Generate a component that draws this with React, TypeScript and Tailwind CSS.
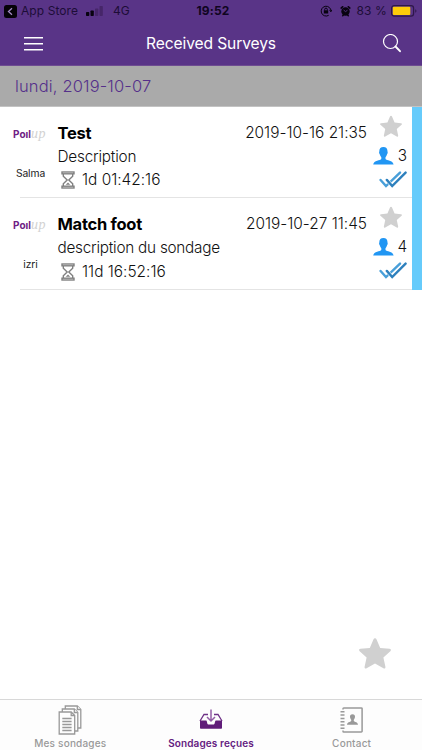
import React from "react";

const STAR =
  "M12 .9c.5 0 .9.3 1.1.8l2.8 6.5 7 .7c1.1.1 1.4 1.1.6 1.8l-5.2 4.7 1.5 6.9c.2 1.1-.6 1.7-1.5 1.1L12 19.8l-6.3 3.6c-.9.6-1.7 0-1.500-1.100l1.500-6.900-5.200-4.700c-.8-.7-.5-1.700.6-1.800l7-.7 2.800-6.500c.2-.5.6-.8 1.100-.8Z";

function Star({ className }: { className: string }) {
  return (
    <svg viewBox="0 0 24 24" className={className} fill="currentColor">
      <path d={STAR} />
    </svg>
  );
}

function Hourglass() {
  return (
    <svg viewBox="0 0 14 18" className="h-[18px] w-[14px] text-[#808080]" fill="none" stroke="currentColor" strokeWidth="1.4">
      <rect x="1" y="1" width="12" height="1.800" />
      <rect x="1" y="15.200" width="12" height="1.800" />
      <path d="M2.300 3v2.200L6.200 9l-3.900 3.800V15M11.700 3v2.200L7.800 9l3.900 3.800V15" />
      <path d="m7 11.600 2.300 2.200H4.700Z" fill="currentColor" stroke="none" />
    </svg>
  );
}

function Person() {
  return (
    <svg viewBox="0 0 21 18" className="h-[18px] w-[21px] text-[#2196f3]" fill="currentColor">
      <path d="M10.400 0C7.700 0 6.300 1.600 6.300 4.200c0 .8-.3.800-.2 1.600.1.900.5 1.100.7 1.700.3 1.200.9 2 1.500 2.700v1.700C7.500 13.600.7 13 .2 17.500h20.400c-.5-4.500-7.300-3.900-8.100-5.600v-1.700c.6-.7 1.200-1.500 1.500-2.700.2-.6.6-.8.7-1.700.1-.8-.2-.8-.2-1.600C14.500 1.600 13.100 0 10.400 0Z" />
    </svg>
  );
}

function DoubleCheck() {
  return (
    <svg viewBox="0 0 28 17" className="h-[17px] w-[28px]" fill="none" strokeLinecap="round" strokeWidth="2.400">
      <path d="m1.600 9 5.400 6L21 1.600" stroke="#489fd9" />
      <path d="m7.500 8.600 5.700 6.400L26.800 1.600" stroke="#fff" strokeWidth="3.400" />
      <path d="m7.800 8.900 5.400 6.100L26.600 1.600" stroke="#2e80bd" />
    </svg>
  );
}

type Survey = {
  title: string;
  description: string;
  remaining: string;
  date: string;
  author: string;
  votes: number;
};

const surveys: Survey[] = [
  { title: "Test", description: "Description", remaining: "1d 01:42:16", date: "2019-10-16 21:35", author: "Salma", votes: 3 },
  { title: "Match foot", description: "description du sondage", remaining: "11d 16:52:16", date: "2019-10-27 11:45", author: "izri", votes: 4 },
];

function SurveyRow({ survey, last }: { survey: Survey; last: boolean }) {
  return (
    <article className={last ? "flex h-[92px]" : "flex h-[91px]"}>
      <div className="flex w-[57px] flex-col items-center pl-1">
        <div className="mt-[19px] flex h-4 items-center pr-[2px] whitespace-nowrap text-[10px] leading-4">
          <span className="font-bold tracking-[0px] text-[#702084]">Poıl</span>
          <span className="font-['Liberation_Serif',serif] text-[14px] tracking-[0.5px] text-[#d2d2d2] italic">up</span>
        </div>
        <span className="mt-[22px] pt-px text-[10.300px] leading-4 tracking-[-0.1px] text-[#222]">{survey.author}</span>
      </div>
      <div className="flex flex-1 flex-col pl-[0.500px]">
        <div className="mt-[14px] flex h-6 items-center justify-between">
          <h2 className="text-[16.500px] font-bold tracking-[-0.280px] text-black">{survey.title}</h2>
          <time className="text-[15.400px] font-light tracking-[0.010px] text-[#111]">{survey.date}</time>
        </div>
        <p className={last ? "h-6 text-[15.300px] leading-[24px] font-light tracking-[-0.240px] text-[#111]" : "h-[23px] text-[15.300px] leading-[23px] font-light tracking-[-0.200px] text-[#111]"}>
          {survey.description}
        </p>
        <div className="flex h-6 items-center gap-[7px] pl-[3.500px]">
          <Hourglass />
          <span className="text-[15.400px] font-light tracking-[0.010px] text-[#111]">{survey.remaining}</span>
        </div>
      </div>
      <div className="flex w-[45px] flex-col pt-[8px] pr-[5px]">
        <Star className="ml-[13px] h-[22px] w-[22px] text-[#d0d0d0]" />
        <div className="mt-[7px] ml-[6px] flex h-[24px] items-center justify-between">
          <Person />
          <span className="text-[15.300px] font-light text-[#111]">{survey.votes}</span>
        </div>
        <div className="mt-[3px] ml-[12px] w-7">
          <DoubleCheck />
        </div>
      </div>
      <div className="w-[10px] bg-[#66cbfb]" />
    </article>
  );
}

function StatusBar() {
  return (
    <div className="grid h-[22px] grid-cols-[1fr_auto_1fr] items-center text-[12px] leading-[22px] text-[#1d0d37]">
      <div className="flex items-center pl-1">
        <svg viewBox="0 0 13 13" className="h-[13px] w-[13px]">
          <rect width="13" height="13" rx="2.500" fill="#050208" />
          <path d="M8 3.300 4.500 6.500 8 9.700" fill="none" stroke="#a38bc5" strokeWidth="1.300" />
        </svg>
        <span className="ml-1 tracking-[0.08px]">App Store</span>
        <svg viewBox="0 0 17 10" className="ml-2 h-[10px] w-[17px]">
          <rect y="6" width="3.300" height="4" rx=".7" fill="#080310" />
          <rect x="4.500" y="4.500" width="3.300" height="5.500" rx=".7" fill="#080310" />
          <rect x="9" y="2.500" width="3.300" height="7.500" rx=".7" fill="#462669" />
          <rect x="13.500" y="0" width="3.300" height="10" rx=".7" fill="#462669" />
        </svg>
        <span className="ml-[10px]">4G</span>
      </div>
      <span className="pl-1 text-[12px] font-bold tracking-[0.2px] text-[#10051f]">19:52</span>
      <div className="flex items-center justify-end pr-[5px]">
        <svg viewBox="0 0 12 12" className="mr-2 h-3 w-3" fill="none" stroke="#080310">
          <path d="M11 6.200A4.900 4.900 0 1 0 8.700 10.300M9.400 5.200l1.600 1.500 1-1.900" strokeWidth="1" />
          <rect x="3.800" y="5.300" width="4.400" height="3.200" fill="#080310" stroke="none" />
          <path d="M4.700 5.500V4.400a1.300 1.300 0 0 1 2.600 0v1.100" />
        </svg>
        <svg viewBox="0 0 11 12" className="mr-[6px] h-3 w-[11px]">
          <circle cx="5.500" cy="6.500" r="4.200" fill="#080310" />
          <path d="M1.100 3.100 2.800 1.700M9.900 3.100 8.200 1.700M2.700 10.700l.7-.7M8.300 10.700l-.7-.7" stroke="#080310" strokeWidth="1.500" strokeLinecap="round" />
          <path d="m3.600 5 1.900 1.600 2-1.400" fill="none" stroke="#593487" strokeWidth=".9" />
        </svg>
        <span className="mr-1 whitespace-nowrap text-[12px] tracking-[0.1px]">83 %</span>
        <svg viewBox="0 0 26 12" className="h-3 w-[26px]">
          <rect x=".6" y=".6" width="22" height="10.600" rx="2.600" fill="none" stroke="#2e1748" strokeWidth="1.200" />
          <rect x="1.800" y="1.800" width="17.500" height="8.200" rx="1" fill="#fecb0b" />
          <path d="M24.300 4.200c1.500.8 1.500 2.800 0 3.600Z" fill="#2e1748" />
        </svg>
      </div>
    </div>
  );
}

function Documents() {
  return (
    <svg viewBox="0 0 24 30" className="h-[30px] w-6" fill="#fdfdfd" stroke="#999" strokeWidth="1.300">
      <path d="M7.300 1h12l3.500 3.500V23H7.300Z" />
      <path d="M19.300 1v3.500h3.500" />
      <path d="M4.300 4h12l3.500 3.500V26H4.300Z" />
      <path d="M16.300 4v3.500h3.500" />
      <path d="M1.200 7h12l3.500 3.500V29H1.200Z" />
      <path d="M13.200 7v3.500h3.500M4.300 13.500h9.300M4.300 16.500h9.300M4.300 19.500h9.300M4.300 22.500h9.300M4.300 25.500h9.300" fill="none" />
    </svg>
  );
}

function Inbox() {
  return (
    <svg viewBox="0 0 24 22" className="h-[22px] w-6">
      <path d="M9 5.500H5L1 12M15 5.500h4l4 6.500" fill="none" stroke="#6e3186" strokeWidth="1.300" />
      <path d="M1 11.500h6.300c.8 0 .7 4 2 4h5.400c1.300 0 1.200-4 2-4H23V19a.8.800 0 0 1-.8.800H1.800A.8.800 0 0 1 1 19Z" fill="#601c79" />
      <path d="M12 .5v11.300M8 8l4 4 4-4" fill="none" stroke="#925da5" strokeWidth="1.500" />
    </svg>
  );
}

function AddressBook() {
  return (
    <svg viewBox="0 0 23 26" className="h-[26px] w-[23px] text-[#999]" fill="none" stroke="currentColor">
      <path d="M3 2.500V1.700a.8.800 0 0 1 .8-.8h17.500a.8.800 0 0 1 .8.800v22.500a.8.800 0 0 1-.8.800H3.800a.8.800 0 0 1-.8-.8v-.7" strokeWidth="1.500" />
      <path d="M.5 4.800h4M.5 8.100h4M.5 11.400h4M.5 14.700h4M.5 18h4M.5 21.300h4" strokeWidth="1.500" />
      <path d="M12.500 7.200c-1.800 0-2.700 1.200-2.500 2.900.1 1.300.7 2 1.200 2.700v1.100c-.9 1.100-4 .9-4.200 3.800h11c-.2-2.900-3.300-2.700-4.200-3.800v-1.100c.5-.7 1.100-1.400 1.200-2.700.2-1.700-.7-2.900-2.500-2.900Z" fill="currentColor" stroke="none" />
    </svg>
  );
}

const tabs = [
  { label: "Mes sondages", icon: <Documents />, active: false },
  { label: "Sondages reçues", icon: <Inbox />, active: true },
  { label: "Contact", icon: <AddressBook />, active: false },
];

export default function App() {
  return (
    <div className="flex h-[750px] w-[422px] flex-col overflow-hidden bg-white font-['Inter','Liberation_Sans',sans-serif]">
      <header className="h-[66px] border-b border-[#6e4c91] bg-[#593487]">
        <StatusBar />
        <div className="grid h-[43px] grid-cols-[1fr_auto_1fr] items-center">
          <svg viewBox="0 0 19 14" className="ml-6 h-[14px] w-[19px]" stroke="#fff" strokeWidth="1.500">
            <path d="M0 .8h19M0 6.700h19M0 12.700h19" />
          </svg>
          <h1 className="text-[15.600px] tracking-[-0.120px] text-white">Received Surveys</h1>
          <svg viewBox="0 0 20 20" className="mr-[20px] h-5 w-5 justify-self-end" fill="none" stroke="#fff" strokeLinecap="round">
            <circle cx="8.500" cy="7.500" r="7" strokeWidth="1.200" />
            <path d="m13.500 12.500 4.500 4.700" strokeWidth="1.900" />
          </svg>
        </div>
      </header>
      <div className="h-[41px] border-b border-[#c3c3c3] bg-[#aaa] pl-[15px] text-[16.500px] leading-[40px] font-light tracking-[0.150px] text-[#55308a]">
        lundi, 2019-10-07
      </div>
      <main className="flex flex-1 flex-col">
        {surveys.map((survey, i) => (
          <div key={survey.title} className="relative">
            <SurveyRow survey={survey} last={i === surveys.length - 1} />
            <div className="absolute right-[10px] bottom-0 left-5 h-px bg-[#e4e4e4]" />
          </div>
        ))}
        <Star className="mt-auto mr-[31px] mb-[30px] h-8 w-8 self-end text-[#d0d0d0]" />
      </main>
      <nav className="grid h-[51px] grid-cols-3 border-t border-[#d8d8d8] bg-[#fdfdfd]">
        {tabs.map((tab) => (
          <div key={tab.label} className="flex flex-col items-center">
            <div className="flex h-[35px] items-center pt-[5px]">{tab.icon}</div>
            <span
              className={
                tab.active
                  ? "text-[10px] leading-[16px] font-semibold tracking-[0.120px] text-[#642080]"
                  : "text-[10px] leading-[16px] font-medium tracking-[0.200px] text-[#999]"
              }
            >
              {tab.label}
            </span>
          </div>
        ))}
      </nav>
    </div>
  );
}
